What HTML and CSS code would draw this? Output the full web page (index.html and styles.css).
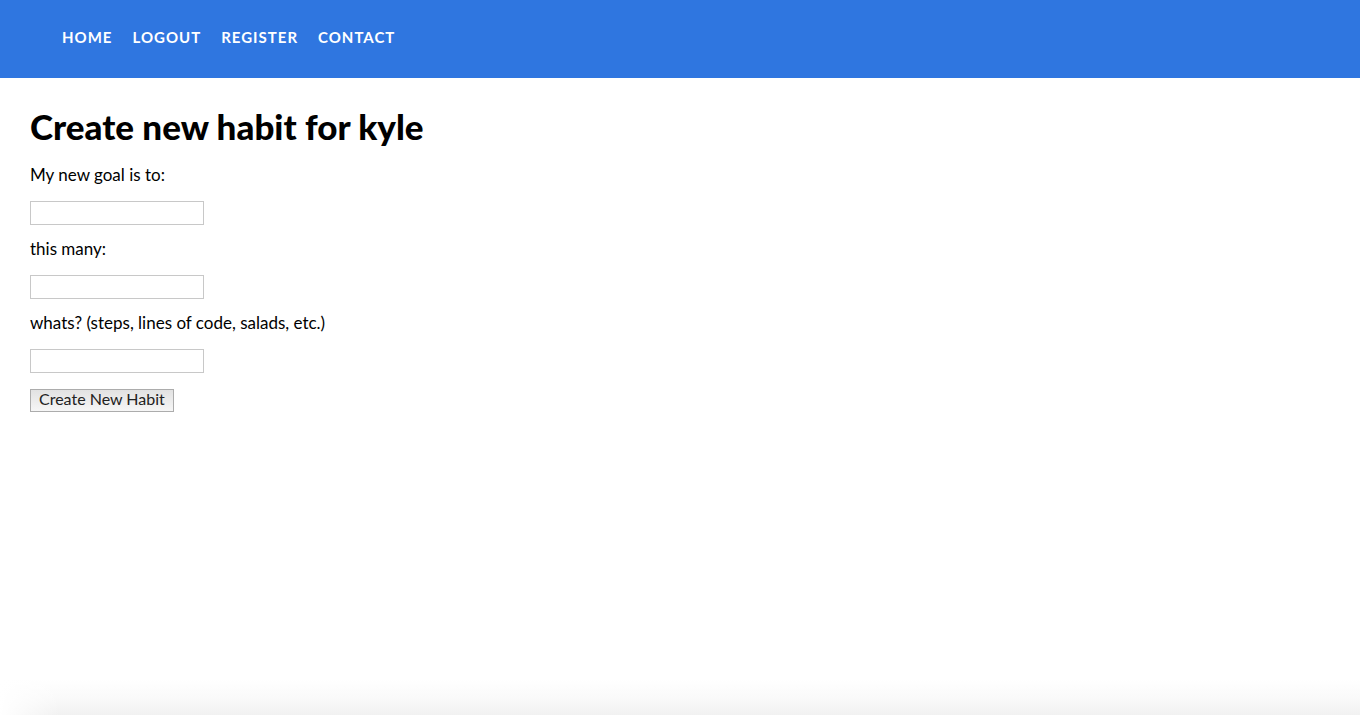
FILE: index.html
```html
<!DOCTYPE html>
<html lang="en">
<head>
<meta charset="utf-8">
<meta name="viewport" content="width=device-width, initial-scale=1">
<title>Create new habit</title>
<link rel="stylesheet" href="styles.css">
</head>
<body>
<header class="site-header">
  <nav class="nav">
    <a class="nav-link" href="#">HOME</a>
    <a class="nav-link" href="#">LOGOUT</a>
    <a class="nav-link" href="#">REGISTER</a>
    <a class="nav-link" href="#">CONTACT</a>
  </nav>
</header>
<main class="content">
  <h1 class="title">Create new habit for kyle</h1>
  <form class="habit-form">
    <label class="label" for="goal">My new goal is to:</label>
    <input class="field" id="goal" name="goal" type="text">
    <label class="label" for="amount">this many:</label>
    <input class="field" id="amount" name="amount" type="text">
    <label class="label" for="unit">whats? (steps, lines of code, salads, etc.)</label>
    <input class="field" id="unit" name="unit" type="text">
    <button class="submit" type="submit">Create New Habit</button>
  </form>
</main>
<div class="bottom-shade"></div>
</body>
</html>
```
FILE: styles.css
```css
* {
  box-sizing: border-box;
}

body {
  display: flex;
  flex-direction: column;
  min-height: 100vh;
  margin: 0;
  background: #fff;
  color: #000;
  font-family: "Avenir Next", Lato, sans-serif;
  font-size: 17px;
  line-height: 22px;
}

.site-header {
  padding: 26px 62px 30px;
  background: #2f76e0;
}

.nav {
  display: flex;
  flex-wrap: wrap;
  gap: 20px;
}

.nav-link {
  color: #fff;
  font-size: 15px;
  font-weight: 700;
  letter-spacing: 1px;
  text-decoration: none;
}

.content {
  padding: 26px 30px;
}

.title {
  margin: 0 0 16px;
  font-size: 35px;
  font-weight: 900;
  line-height: 44px;
}

.habit-form {
  display: flex;
  flex-direction: column;
  align-items: flex-start;
}

.label {
  margin-bottom: 15px;
}

.field {
  width: 174px;
  height: 24px;
  margin: 0 0 13px;
  padding: 0 4px;
  border: 1px solid #c8c8c8;
  background: #fff;
  font: inherit;
}

.submit {
  margin-top: 3px;
  padding: 0 8px 3px;
  border: 1px solid #acacac;
  border-radius: 0;
  background: linear-gradient(#e2e2e2, #f6f6f6);
  color: #222;
  font: inherit;
  font-size: 16px;
  line-height: 18px;
}

.bottom-shade {
  height: 36px;
  margin-top: auto;
  background:
    linear-gradient(to right, #fff, transparent 60px),
    linear-gradient(#fff, #fafafa 50%, #f1f1f1);
}
```
